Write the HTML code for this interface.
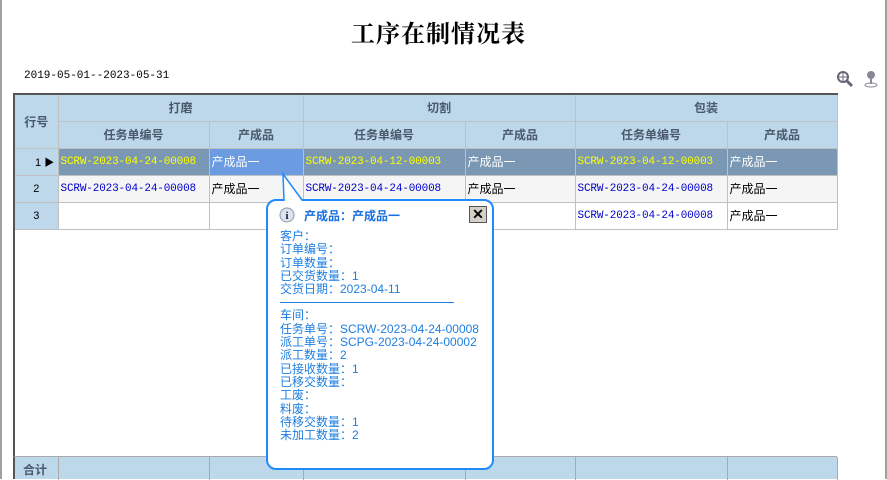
<!DOCTYPE html>
<html><head><meta charset="utf-8"><style>
*{margin:0;padding:0;box-sizing:border-box}
body{width:887px;height:479px;background:#fff;position:relative;overflow:hidden;font-family:"Liberation Sans","Noto Sans CJK SC",sans-serif;font-size:12px}
.lb{position:absolute;left:0;top:0;width:2px;height:479px;background:#a0a0a0}
.rb{position:absolute;right:0;top:0;width:2px;height:479px;background:#a0a0a0}
h1{position:absolute;left:0;width:887px;top:14px;text-align:center;font:bold 24px "Liberation Serif","Noto Serif CJK SC",serif;letter-spacing:1px;padding-right:10px}
.date{position:absolute;left:24px;top:70px;font-family:"Liberation Mono",monospace;font-size:11px}
table{position:absolute;left:13px;top:93px;border-collapse:collapse;border-top:2px solid #555;border-left:2px solid #555}
td{border:1px solid #c0c0c0;height:27px;padding:0 2px;white-space:nowrap}
.h{background:#bdd7eb;color:#4a5a6a;font-weight:bold;text-align:center;font-size:12px}
.rn{background:#bdd7eb;text-align:center;font-size:11px}
.sel td.d{background:#7a98b3;color:#fff}
.sel td.y{background:#7a98b3;color:#ff0;font-family:"Liberation Mono",monospace;font-size:11px;letter-spacing:-0.15px}
.sel td.cur{background:#6b9be0;color:#fff}
.b{color:#00c;font-family:"Liberation Mono",monospace;font-size:11px;letter-spacing:-0.15px}
.g td{background:#f5f5f5}
.foot{position:absolute;left:13px;top:456px;height:23px;width:824px;background:#bdd7eb;border-top:1px solid #aaa;border-left:2px solid #555}
.foot span{position:absolute;top:0;height:23px;border-left:1px solid #aaa}
.tip{position:absolute;left:266px;top:199px;width:228px;height:271px;background:#fff;border:2px solid #1e8cff;border-radius:10px;color:#1e7fe0;font-size:12px;line-height:13.3px}
.tip .t{position:absolute;left:36px;top:9px;font-weight:bold;color:#1a6fe0}
.tip .x{position:absolute;left:201px;top:5px;width:18px;height:17px;background:#d4d0c8;border:1px solid #555;font:bold 14px "Liberation Sans";text-align:center;line-height:15px;color:#000}
.tip .body{position:absolute;left:12px;top:29px}
.tip hr{border:0;border-top:1px solid #1e7fe0;width:174px;margin:6px 0 6px}
</style></head><body>
<div class="lb"></div><div class="rb"></div>
<h1>工序在制情况表</h1>
<div class="date">2019-05-01--2023-05-31</div>
<svg style="position:absolute;left:836px;top:70px" width="18" height="18"><circle cx="7" cy="7" r="5" fill="none" stroke="#667" stroke-width="2"/><line x1="3" y1="7" x2="11" y2="7" stroke="#667"/><line x1="7" y1="3" x2="7" y2="11" stroke="#667"/><line x1="11" y1="11" x2="16" y2="16" stroke="#667" stroke-width="3"/></svg>
<svg style="position:absolute;left:864px;top:70px" width="14" height="18"><circle cx="7" cy="5" r="4" fill="#889"/><line x1="7" y1="9" x2="7" y2="14" stroke="#889" stroke-width="2"/><ellipse cx="7" cy="15" rx="6" ry="2" fill="none" stroke="#889"/></svg>
<table>
<tr><td class="h" rowspan="2" style="width:44px">行号</td><td class="h" colspan="2">打磨</td><td class="h" colspan="2">切割</td><td class="h" colspan="2">包装</td></tr>
<tr><td class="h" style="width:151px">任务单编号</td><td class="h" style="width:94px">产成品</td><td class="h" style="width:162px">任务单编号</td><td class="h" style="width:110px">产成品</td><td class="h" style="width:152px">任务单编号</td><td class="h" style="width:110px">产成品</td></tr>
<tr class="sel"><td class="rn" style="text-align:left;padding-left:20px">1 <span style="font-size:10px;color:#000">▶</span></td><td class="y">SCRW-2023-04-24-00008</td><td class="cur">产成品一</td><td class="y">SCRW-2023-04-12-00003</td><td class="d">产成品一</td><td class="y">SCRW-2023-04-12-00003</td><td class="d">产成品一</td></tr>
<tr class="g"><td class="rn" style="background:#bdd7eb">2</td><td class="b">SCRW-2023-04-24-00008</td><td>产成品一</td><td class="b">SCRW-2023-04-24-00008</td><td>产成品一</td><td class="b">SCRW-2023-04-24-00008</td><td>产成品一</td></tr>
<tr><td class="rn">3</td><td></td><td></td><td></td><td></td><td class="b">SCRW-2023-04-24-00008</td><td>产成品一</td></tr>
</table>
<div style="position:absolute;left:13px;top:228px;width:2px;height:228px;background:#555"></div>
<div class="foot"><b style="position:absolute;left:8px;top:4px;color:#4a5a6a;font-size:12px">合计</b><span style="left:43px"></span><span style="left:194px"></span><span style="left:288px"></span><span style="left:450px"></span><span style="left:560px"></span><span style="left:712px"></span><span style="left:822px"></span></div>
<div class="tip">
<svg style="position:absolute;left:10px;top:6px" width="18" height="18"><circle cx="9" cy="8" r="7" fill="#dde4f0" stroke="#8899aa"/><text x="9" y="12" font-size="11" font-weight="bold" text-anchor="middle" fill="#123" font-family="Liberation Serif">i</text></svg>
<div class="t">产成品：产成品一</div>
<div class="x">✕</div>
<div class="body">客户：<br>订单编号：<br>订单数量：<br>已交货数量：1<br>交货日期：2023-04-11<hr>车间：<br>任务单号：SCRW-2023-04-24-00008<br>派工单号：SCPG-2023-04-24-00002<br>派工数量：2<br>已接收数量：1<br>已移交数量：<br>工废：<br>料废：<br>待移交数量：1<br>未加工数量：2</div>
</div>
<svg style="position:absolute;left:280px;top:172px" width="30" height="30"><path d="M3 2 L4 29 L22 29 Z" fill="#fff"/><path d="M4 29 L3 2 L22 28" fill="none" stroke="#1e8cff" stroke-width="1.5"/></svg>
</body></html>
